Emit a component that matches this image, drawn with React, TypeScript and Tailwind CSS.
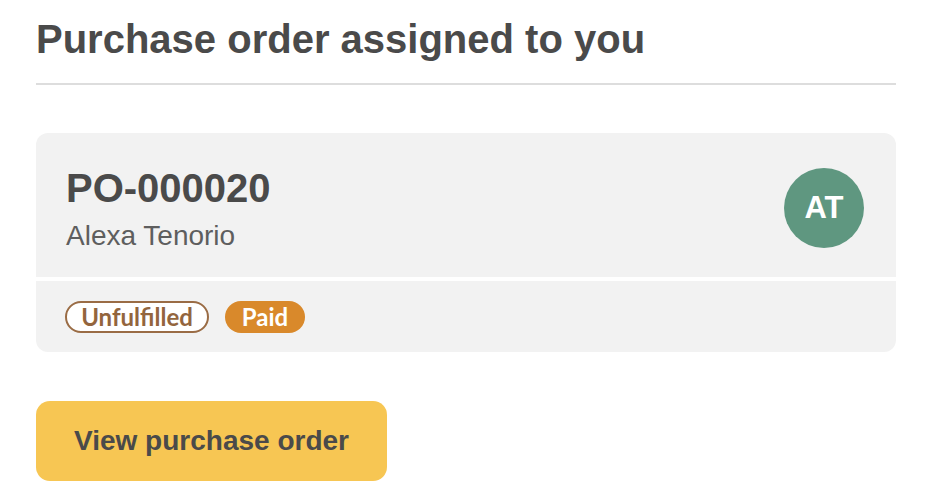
import React from "react";

export default function App() {
  return (
    <div className="w-[926px] h-[503px] bg-white pl-[36px] pr-[30px] pt-[15px] font-['Liberation_Sans',Arial,sans-serif]">
      <h1 className="text-[40px] leading-[48px] font-bold text-[#4a4a4a]">Purchase order assigned to you</h1>
      <div className="mt-[20px] h-[2px] bg-[#dddddd]" />
      <div className="mt-[48px] flex flex-col gap-[4px]">
        <div className="flex items-center justify-between bg-[#f2f2f2] rounded-t-[12px] pl-[30px] pr-[32px] pt-[31px] pb-[25px]">
          <div className="flex flex-col">
            <div className="text-[40px] leading-[48px] font-bold text-[#4a4a4a]">PO-000020</div>
            <div className="mt-[8px] text-[28px] leading-[32px] text-[#5e5e5e]">Alexa Tenorio</div>
          </div>
          <div className="w-[80px] h-[80px] rounded-full bg-[#5f9780] flex items-center justify-center text-white font-bold text-[31px]">
            AT
          </div>
        </div>
        <div className="flex items-center gap-[16px] bg-[#f2f2f2] rounded-b-[12px] h-[71px] px-[29px] font-['Lato',sans-serif]">
          <span className="h-[32px] w-[144px] flex items-center justify-center rounded-full border-2 border-[#9a6c45] bg-white text-[#93653d] font-bold text-[24px] leading-none">
            Unfulfilled
          </span>
          <span className="h-[32px] w-[80px] flex items-center justify-center rounded-full bg-[#d9892b] text-white font-bold text-[24px] leading-none">
            Paid
          </span>
        </div>
      </div>
      <button className="mt-[49px] w-[351px] h-[80px] rounded-[14px] bg-[#f7c653] text-[#4a4a4a] font-bold text-[28px]">
        View purchase order
      </button>
    </div>
  );
}
